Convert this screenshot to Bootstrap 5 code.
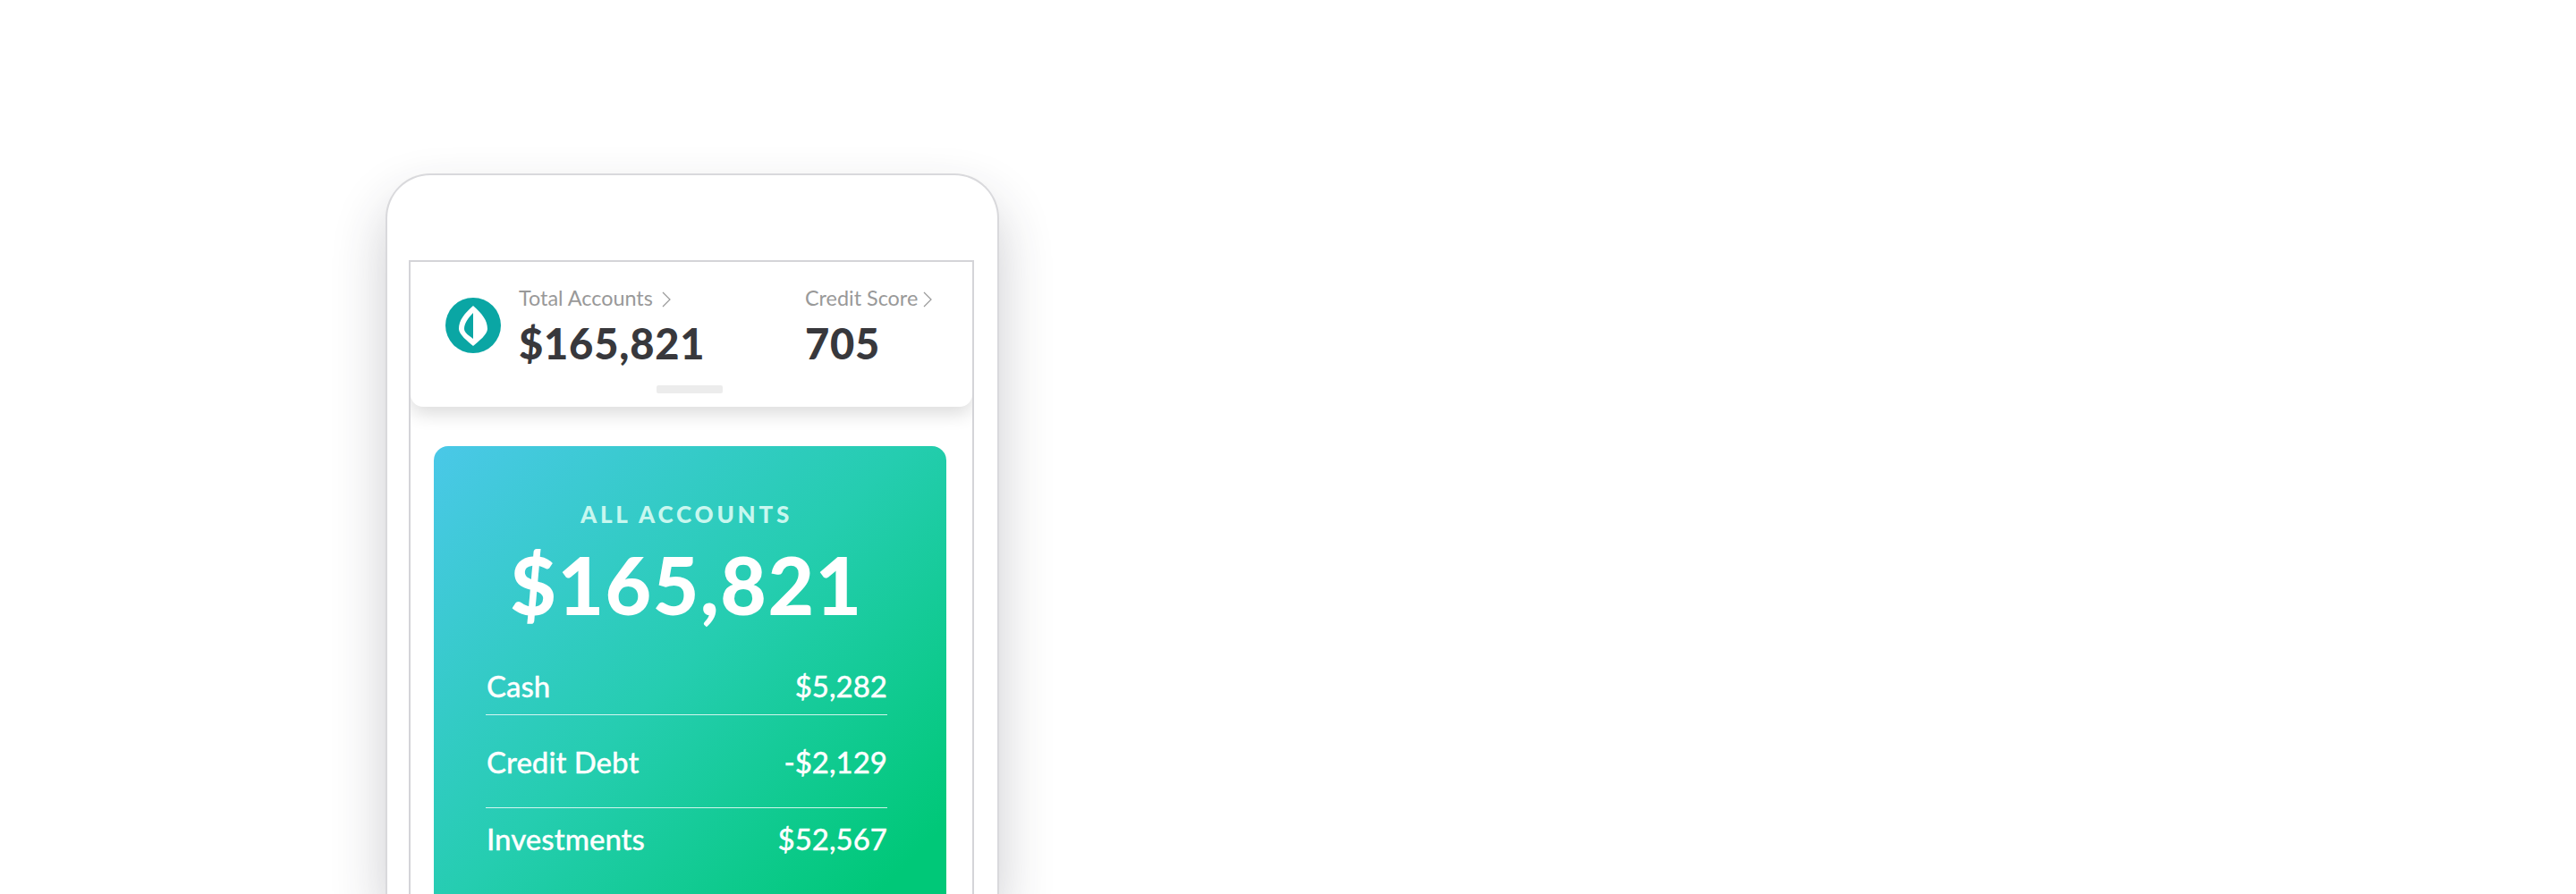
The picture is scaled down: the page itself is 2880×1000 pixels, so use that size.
<!DOCTYPE html>
<html lang="en"><head><meta charset="utf-8"><title>Accounts</title>
<link href="https://cdn.jsdelivr.net/npm/bootstrap@5.3.0/dist/css/bootstrap.min.css" rel="stylesheet">
<style>
html,body{height:1000px;overflow:hidden;background:#fff}
body{font-family:Lato,"Liberation Sans",sans-serif;padding:194px 0 0 431px}
.phone{width:686px;height:806px;border:2px solid #d9d9dc;border-bottom:0;border-radius:50px 50px 0 0;box-shadow:0 30px 60px rgba(40,40,60,.24);padding:95px 26px 0 24px;background:#fff}
.screen{border:2px solid #d4d4d8;border-bottom:0;height:709px;overflow:hidden}
.summary{height:162px;border-radius:0 0 14px 14px;box-shadow:0 8px 20px rgba(0,0,0,.14);padding:25px 0 0 39px;position:relative;background:#fff}
.logo{width:62px;height:62px;margin-top:15px;margin-right:20px}
.acct-a{width:320px}
.lbl{font-size:23.4px;line-height:30px;color:#999;white-space:nowrap}
.lbl svg{vertical-align:-2px}
.val{font-size:47px;line-height:50px;font-weight:900;color:#38383c;margin-top:11px;letter-spacing:.8px}
.grip{width:74px;height:9px;background:#ececec;border-radius:2px;position:absolute;left:275px;bottom:15px}
.hero{margin:44px 29px 0 26px;height:600px;border-radius:16px;background:linear-gradient(135deg,#4ac8e8 0%,#25cdb0 45%,#00c878 85%);color:#fff;padding:58px 66px 0 58px}
.eyebrow{font-size:26px;line-height:36px;font-weight:900;letter-spacing:3.8px;color:#c8f7ef}
.big{font-size:89px;line-height:100px;font-weight:900;margin-top:11px;letter-spacing:1.5px}
.line{font-size:33px;line-height:40px;font-weight:500;padding-left:1px;-webkit-text-stroke:.3px #fff}
.r1{margin-top:43px;padding-bottom:12px}
.r2{padding-top:32px;padding-bottom:31px}
.r3{padding-top:14px}
.sep{border-bottom:1px solid rgba(255,255,255,.8)}
</style></head><body>
<div class="phone"><div class="screen">
<div class="summary d-flex">
<svg class="logo flex-shrink-0" viewBox="-31 -31 62 62"><circle r="31" fill="#0aa6a4"/><path d="M0-22C10-13 16-6 16 4 16 10 6 18 0 23-6 18-16 10-16 4-16-6-10-13 0-22Z" fill="#fff"/><path d="M0-14C-6-8-10-2-10 4-10 8-4 12 0 15Z" fill="#0aa6a4"/></svg>
<div class="acct-a"><div class="lbl">Total Accounts <svg width="11" height="18" viewBox="0 0 11 18" class="ms-1"><path d="M1 1l8 8-8 8" fill="none" stroke="#999" stroke-width="1.200"/></svg></div><div class="val">$165,821</div></div>
<div><div class="lbl">Credit Score <svg width="11" height="18" viewBox="0 0 11 18"><path d="M1 1l8 8-8 8" fill="none" stroke="#999" stroke-width="1.200"/></svg></div><div class="val">705</div></div>
<div class="grip"></div>
</div>
<div class="hero">
<div class="eyebrow text-center">ALL ACCOUNTS</div>
<div class="big text-center">$165,821</div>
<div class="line r1 sep d-flex justify-content-between"><span>Cash</span><span>$5,282</span></div>
<div class="line r2 sep d-flex justify-content-between"><span>Credit Debt</span><span>-$2,129</span></div>
<div class="line r3 d-flex justify-content-between"><span>Investments</span><span>$52,567</span></div>
</div>
</div></div>
</body></html>
